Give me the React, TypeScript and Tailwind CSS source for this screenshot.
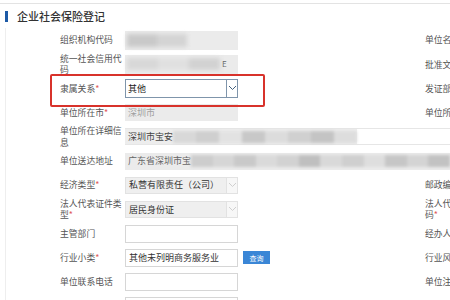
import type { ReactNode } from 'react';

const font = { fontFamily: '"Noto Sans CJK SC", "Microsoft YaHei", sans-serif' };

// blurred stripes standing in for masked personal data
function Smudge({ shades }: { shades: string[] }) {
  return (
    <div className="flex h-[12px] flex-1 blur-[1.5px]">
      {shades.map((s, i) => (
        <span key={i} className={`h-full flex-1 ${s}`} />
      ))}
    </div>
  );
}

function Label({ text, req }: { text: string; req?: boolean }) {
  return (
    <div className="w-[65px] shrink-0 pr-[2px] text-[8.8px] leading-[11.5px] text-[#555]">
      {text}
      {req && <span className="text-[#e05a5a]">*</span>}
    </div>
  );
}

function Row({
  label,
  req,
  right,
  rightReq,
  wide,
  children,
}: {
  label: string;
  req?: boolean;
  right?: string;
  rightReq?: boolean;
  wide?: boolean;
  children: ReactNode;
}) {
  if (wide) {
    return (
      <div className="flex h-[24.2px] items-center pl-[54px]">
        <Label text={label} req={req} />
        <div className="flex-1">{children}</div>
      </div>
    );
  }
  return (
    <div className="flex h-[24.2px] items-center">
      <div className="flex w-[419px] shrink-0 items-center pl-[54px]">
        <Label text={label} req={req} />
        {children}
      </div>
      {right && (
        <div className="w-[65px] shrink-0 text-[8.8px] leading-[11.5px] text-[#555]">
          {right}
          {rightReq && <span className="text-[#e05a5a]">*</span>}
        </div>
      )}
    </div>
  );
}

function Chevron({ color }: { color: string }) {
  return (
    <svg width="9" height="6" viewBox="0 0 9 6" fill="none">
      <path d="M1 1l3.5 3.5L8 1" stroke={color} strokeWidth="1" />
    </svg>
  );
}

function GreySelect({ value }: { value: string }) {
  return (
    <div className="flex h-[17px] w-[113px] items-center border border-[#e2e2e2] bg-[#efefef]">
      <span className="flex-1 truncate pl-[3px] text-[9px] text-[#333]">{value}</span>
      <span className="flex h-full w-[11px] items-center justify-center border-l border-[#e2e2e2] bg-[#f7f7f7]">
        <Chevron color="#cfcfcf" />
      </span>
    </div>
  );
}

function TextBox({ value }: { value?: string }) {
  return (
    <div className="flex h-[18px] w-[113px] items-center border border-[#d6d6d6] bg-white pl-[3px] text-[9px] text-[#333]">
      {value}
    </div>
  );
}

function QueryButton() {
  return (
    <button className="ml-[5px] flex h-[13px] w-[27px] items-center justify-center bg-[#3a86d6] text-[7px] text-white">
      查询
    </button>
  );
}

export default function App() {
  return (
    <div className="relative h-[300px] w-[450px] overflow-hidden bg-white" style={font}>
      <div className="mt-[3px] border-t border-[#e3e3e3]" />

      <div className="flex h-[24px] items-center">
        <span className="ml-[5px] h-[11px] w-[3px] bg-[#1d5aa6]" />
        <span className="ml-[9px] text-[11px] font-medium text-[#333]">企业社会保险登记</span>
      </div>

      <div className="ml-[5px] border-l border-[#eeeeee]">
        <Row label="组织机构代码" right="单位名称">
          <div className="flex h-[19px] w-[113px] items-center bg-[#ebebeb] px-[2px]">
            <div className="flex h-[13px] w-[60px] blur-[2px]">
              <span className="flex-1 bg-[#c9c9c9]" />
              <span className="flex-1 bg-[#d4d4d4]" />
            </div>
          </div>
        </Row>

        <Row label="统一社会信用代码" right="批准文号">
          <div className="flex h-[19px] w-[113px] items-center bg-[#ebebeb] px-[2px]">
            <div className="flex h-[12px] w-[93px] blur-[2px]">
              <span className="flex-1 bg-[#d8d8d8]" />
              <span className="flex-1 bg-[#e0e0e0]" />
              <span className="flex-1 bg-[#d2d2d2]" />
            </div>
            <span className="ml-[2px] text-[8px] text-[#666]">E</span>
          </div>
        </Row>

        <Row label="隶属关系" req right="发证部门">
          <div className="flex h-[19px] w-[113px] items-center border border-[#7f95ab] bg-white">
            <span className="flex-1 pl-[2px] text-[9px] text-[#222]">其他</span>
            <span className="flex h-full w-[11px] items-center justify-center border-l border-[#7f95ab]">
              <Chevron color="#43607e" />
            </span>
          </div>
        </Row>

        <Row label="单位所在市" req right="单位所在区">
          <div className="flex h-[17px] w-[113px] items-center bg-[#ebebeb] pl-[3px] text-[9px] text-[#a0a0a0]">
            深圳市
          </div>
        </Row>

        <Row label="单位所在详细信息" wide>
          <div className="flex h-[17px] items-center border-y border-[#e6e6e6] bg-white">
            <div className="flex h-full w-[232px] items-center bg-[#ededed] pl-[3px]">
              <span className="text-[9px] text-[#444]">深圳市宝安</span>
              <Smudge
                shades={[
                  'bg-[#d8d8d8]',
                  'bg-[#cfcfcf]',
                  'bg-[#e2e2e2]',
                  'bg-[#c8c8c8]',
                  'bg-[#dcdcdc]',
                  'bg-[#d0d0d0]',
                  'bg-[#c4c4c4]',
                  'bg-[#dddddd]',
                ]}
              />
            </div>
          </div>
        </Row>

        <Row label="单位送达地址" wide>
          <div className="flex h-[17px] items-center bg-[#ebebeb] pl-[3px]">
            <span className="text-[9px] text-[#666]">广东省深圳市宝</span>
            <Smudge
              shades={[
                'bg-[#cdcdcd]',
                'bg-[#d6d6d6]',
                'bg-[#c9c9c9]',
                'bg-[#dadada]',
                'bg-[#d2d2d2]',
                'bg-[#bfbfbf]',
                'bg-[#d9d9d9]',
                'bg-[#cfcfcf]',
                'bg-[#dedede]',
                'bg-[#c6c6c6]',
                'bg-[#d4d4d4]',
                'bg-[#c2c2c2]',
              ]}
            />
          </div>
        </Row>

        <Row label="经济类型" req right="邮政编码">
          <GreySelect value="私营有限责任（公司）" />
        </Row>

        <Row label="法人代表证件类型" req right="法人代表证件号码" rightReq>
          <GreySelect value="居民身份证" />
        </Row>

        <Row label="主管部门" right="经办人">
          <TextBox />
        </Row>

        <Row label="行业小类" req right="行业风险类别">
          <TextBox value="其他未列明商务服务业" />
          <QueryButton />
        </Row>

        <Row label="单位联系电话" right="单位注册地址">
          <TextBox />
        </Row>

        <Row label="单位注册地址" right="用人单位">
          <TextBox />
          <QueryButton />
        </Row>
      </div>

      {/* annotation box */}
      <div className="absolute left-[50px] top-[74px] h-[33px] w-[215px] rounded-[2px] border-2 border-[#d8322b]" />
    </div>
  );
}
